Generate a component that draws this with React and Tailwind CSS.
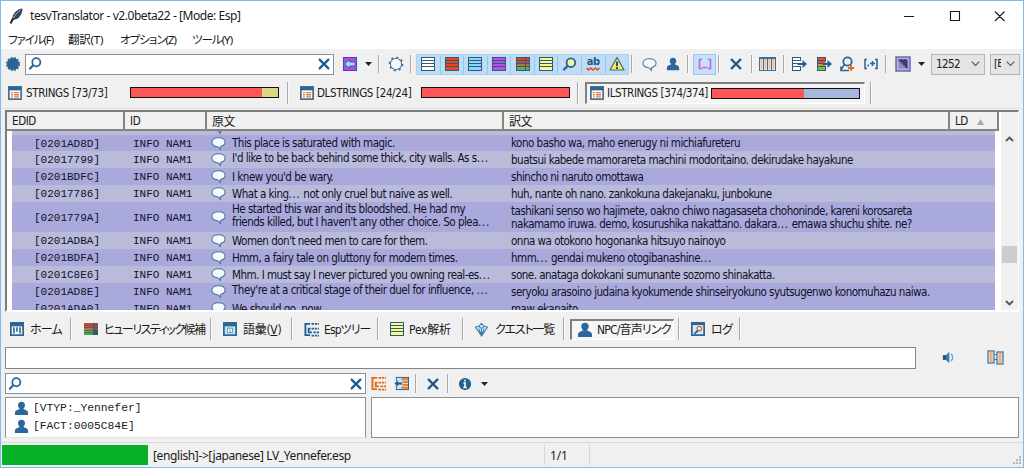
import clsx from "clsx";

const NAVY = "#2a6496";
const UI = "font-['DejaVu_Sans_Condensed','DejaVu_Sans','Noto_Sans_CJK_JP',sans-serif] [font-stretch:condensed]";
const SEGOE = "font-['Noto_Sans','Noto_Sans_CJK_JP',sans-serif]";
const MONO = "font-['Liberation_Mono','DejaVu_Sans_Mono',monospace]";

const Svg = ({ size = 16, children }) => (
    <svg width={size} height={size} viewBox="0 0 16 16" fill="none" className="shrink-0">
        {children}
    </svg>
);

const Sep = ({ className }) => (
    <div className={clsx("flex shrink-0 justify-center", className)}>
        <div className="h-full w-[2px] border-l border-[#a9a9a9] bg-[#fafafa]" />
    </div>
);

const Cell = ({ className, children }) => (
    <div className={clsx("flex shrink-0 items-center justify-center", className)}>{children}</div>
);

const QuillIcon = () => (
    <Svg>
        <path d="M14.5 .5c-4 .2-8 3-9.800 7.500L4 12.500l4.500-1.500C12.500 9 14.300 5 14.500 .5Z" fill="#2f4560" />
        <path d="M12.500 2C9.500 4 7 7 5.500 10" stroke="#a9bacb" />
        <path d="M5 10.500 2.500 15.500" stroke="#1b1b1b" strokeWidth="1.800" />
    </Svg>
);

const GearIcon = () => (
    <Svg>
        <circle cx="8" cy="8" r="6" fill={NAVY} />
        <circle cx="8" cy="8" r="6.300" stroke={NAVY} strokeWidth="1.400" strokeDasharray="2.100 1.200" />
    </Svg>
);

const DottedGearIcon = () => (
    <Svg>
        <circle cx="8" cy="8" r="5.500" stroke="#3a719f" strokeWidth="1.200" />
        <circle cx="8" cy="8" r="6.600" stroke="#3a719f" strokeWidth="1.500" strokeDasharray="2.200 2.980" />
        <circle cx="8" cy="8" r="4.900" fill="#f4f8fb" />
    </Svg>
);

const SearchIcon = ({ size = 14, fill = "none" }) => (
    <Svg size={size}>
        <circle cx="9.500" cy="6" r="4.600" stroke={NAVY} strokeWidth="2" fill={fill} />
        <path d="M6 9.500 1.500 14" stroke={NAVY} strokeWidth="2.400" />
    </Svg>
);

const CloseIcon = ({ size = 14 }) => (
    <Svg size={size}>
        <path d="M3 3l10 10M13 3 3 13" stroke="#22598a" strokeWidth="2.600" strokeLinecap="round" />
    </Svg>
);

const ListIcon = ({ fill, multi }) => (
    <Svg>
        <rect x="1.500" y="1.500" width="13" height="13" fill={fill} />
        {multi && <path d="M2 7h12v3H2z" fill="#b07a3a" />}
        {multi && <path d="M2 10h12v4H2z" fill="#6cab55" />}
        <path d="M1 4.500h14M1 7.500h14M1 10.500h14" stroke="#2c5a80" />
        {multi && <path d="M10.500 2v12" stroke="#2c5a80" />}
        <rect x="1.500" y="1.500" width="13" height="13" stroke="#2c5a80" />
    </Svg>
);

const SpellIcon = () => (
    <div className="flex h-4 w-4 flex-col items-center">
        <span className="font-['DejaVu_Sans',sans-serif] text-[11px] leading-[11px] font-bold tracking-[-0.5px] text-[#1f5a8a]">ab</span>
        <svg width="14" height="4" viewBox="0 0 14 4" fill="none">
            <path d="M.5 1 2.500 3 4.700 1 7 3 9.300 1 11.500 3 13.500 1" stroke="#e8431c" strokeWidth="1.500" />
        </svg>
    </div>
);

const WarnIcon = () => (
    <Svg>
        <path d="M8 1.500 15 14H1Z" fill="#f4ee5e" stroke="#3c6a7c" strokeWidth="1.200" strokeLinejoin="round" />
        <path d="M8 5.500v4.500M8 11v2" stroke="#1f5276" strokeWidth="2" />
    </Svg>
);

const BubbleIcon = ({ size = 15 }) => (
    <Svg size={size}>
        <path
            d="M8 1.800c-4 0-7 2-7 4.900 0 2.700 2.700 4.500 6 4.700.8 0 2 .9 2.800 3.100.5-.9.7-2.200.5-3.400 2.700-.6 4.700-2.300 4.700-4.400 0-2.900-3-4.900-7-4.900Z"
            fill="#f7fbfd"
            stroke="#3f789f"
            strokeWidth="1.100"
        />
    </Svg>
);

const PersonIcon = ({ size = 16 }) => (
    <Svg size={size}>
        <path d="M8 .8c2.400 0 3.700 1.500 3.700 3.500 0 1.500-.6 2.700-1.400 3.500v.9c2 .7 4.700 1.200 4.700 4V15H1v-2.300c0-2.800 2.700-3.300 4.700-4v-.9C4.900 7 4.300 5.800 4.300 4.300 4.300 2.300 5.600.8 8 .8Z" fill="#2c669a" />
    </Svg>
);

const BracketIcon = () => (
    <Svg>
        <path d="M5 3.500H2.500v9H5M11 3.500h2.500v9H11M5.500 11.500h5" stroke="#c062ee" strokeWidth="1.600" />
    </Svg>
);

const PurpleArrowIcon = () => (
    <Svg>
        <rect x="1.500" y="1.500" width="13" height="13" fill="#c53df0" stroke="#2f5b86" />
        <path d="M7.500 3.500 2.500 8l5 4.500v-2.500H13V6H7.500Z" fill="#8fe0fb" stroke="#2a6090" strokeWidth=".8" />
    </Svg>
);

const ColumnsIcon = () => (
    <svg width="17" height="16" viewBox="0 0 17 16" fill="none">
        <rect x=".5" y="1.500" width="16" height="13" fill="#f7efe8" stroke="#3c6f98" />
        <path d="M2.500 3.500v10M6.500 3.500v10M10.500 3.500v10M14.500 3.500v10" stroke="#d98d54" strokeWidth="2" strokeDasharray="1 1" />
        <path d="M4.500 2v12M8.500 2v12M12.500 2v12M0 2.500h17" stroke="#3c6f98" />
    </svg>
);

const ExportIcon = ({ colored }) => (
    <Svg>
        <rect x="1.500" y="1.500" width="8" height="13" fill={colored ? "#f04a22" : "#fff"} />
        {colored && <path d="M2 7h7v3H2z" fill="#d9903a" />}
        {colored && <path d="M2 10h7v4H2z" fill="#76c13e" />}
        <path d="M1 1.500h9M1 4.500h9M1 7.500h7M1 10.500h9M1 14.500h9M1.500 1v14M9.500 1v4M9.500 11v4" stroke="#2c5a80" />
        <path d="M6.500 7h5V4L16 8l-4.500 4V9h-5Z" fill="#235f92" />
    </Svg>
);

const FindUserIcon = () => (
    <Svg>
        <circle cx="8.500" cy="5.500" r="4.200" stroke={NAVY} strokeWidth="1.800" />
        <path d="M5.500 8.500 2 13.500M2 10.500v4h8" stroke={NAVY} strokeWidth="1.600" />
        <path d="M12 9v6M9 12h6" stroke="#e06a1a" strokeWidth="1.800" />
    </Svg>
);

const BraceArrowIcon = () => (
    <Svg>
        <path d="M4 3.500H2v9h2M12 3.500h2v9h-2M7 7.500h5M9.500 5v5" stroke={NAVY} strokeWidth="1.500" />
        <path d="M4.500 9.500h1.500" stroke={NAVY} strokeWidth="1.800" />
    </Svg>
);

const GradientIcon = () => (
    <Svg>
        <rect x="1" y="1" width="14" height="14" fill="#b7b4dc" stroke="#6460a8" strokeWidth="1.400" />
        <rect x="3.500" y="3.500" width="9" height="9" fill="#8c88c4" />
        <path d="M3.500 3.500 12.500 12.500V3.500Z" fill="#4b4788" />
        <path d="M3.500 3.500 12.500 12.500M6 3.500l6.500 6.500M9 3.500l3.500 3.500" stroke="#2b2862" strokeWidth="1.200" strokeDasharray="1.400 .8" />
    </Svg>
);

const Caret = () => (
    <svg width="7" height="4" viewBox="0 0 7 4">
        <path d="M0 0h7L3.500 4Z" fill="#222" />
    </svg>
);

const Chevron = () => (
    <svg width="9" height="6" viewBox="0 0 9 6" fill="none">
        <path d="M.7.7 4.500 4.500 8.300.7" stroke="#5a5a5a" strokeWidth="1.200" />
    </svg>
);

const FormIcon = () => (
    <Svg size={14}>
        <rect x="1" y="1" width="14" height="14" fill="#fff" stroke="#2f6592" strokeWidth="1.800" />
        <path d="M1 1h14v4H1z" fill="#2f6592" />
        <path d="M3.500 7.500h2M3.500 10h2M3.500 12.500h2M7 7.500h5.500M7 10h5.500M7 12.500h5.500" stroke="#df7838" strokeWidth="1.500" />
    </Svg>
);

const HomeIcon = () => (
    <Svg size={14}>
        <rect x="1" y="1" width="14" height="14" fill="#f5fafd" stroke="#2f6592" strokeWidth="2" />
        <path d="M1 1h14v4H1z" fill="#2f6592" />
        <path d="M4.500 6v7M8 6v5M11.500 6v7" stroke="#3a79a8" strokeWidth="2" />
    </Svg>
);

const VocabIcon = () => (
    <Svg size={14}>
        <rect x="1" y="1" width="14" height="14" fill="#cbe6f3" stroke="#2f6592" strokeWidth="2" />
        <path d="M1 1h14v4H1z" fill="#2f6592" />
        <rect x="5" y="7" width="6" height="5" fill="#fff" stroke="#4d97c4" />
        <path d="M8 7v5" stroke="#4d97c4" />
    </Svg>
);

const TreeIcon = ({ color = "#24608f" }) => (
    <Svg size={15}>
        <path d="M6.500 2H1.500v12h5M7 7H5v4h3.500" stroke={color} strokeWidth="2" />
        <path d="M8 2h8M8 7h8M10 11h6M8 14.500h8" stroke={color} strokeWidth="1.800" strokeDasharray="2.600 .9" />
    </Svg>
);

const HeuristicIcon = () => (
    <Svg>
        <rect x="1" y="2" width="14" height="12" fill="#345a72" />
        <path d="M1 3h9M1 5.500h9" stroke="#f04a22" strokeWidth="1.700" />
        <path d="M1 8h9" stroke="#d9803a" strokeWidth="1.500" />
        <path d="M1 10.500h9M1 13h9" stroke="#5cb646" strokeWidth="1.500" />
        <path d="M11 3h4M11 5.500h4M11 8h4" stroke="#b0503a" strokeWidth="1.400" />
    </Svg>
);

const QuestIcon = () => (
    <Svg size={15}>
        <path d="M8 1.500 5 4.500l3 2.500 3-2.500ZM1.500 5.500 8 15l6.500-9.500-3.500-1L8 7 5 4.500ZM5 7l3 7 3-7M8 7v7" fill="#d9edf7" stroke="#3f7dab" strokeWidth="1.100" />
    </Svg>
);

const LogIcon = () => (
    <Svg size={14}>
        <rect x="1" y="1" width="14" height="14" fill="#d8eaf5" stroke="#2f6592" strokeWidth="2" />
        <path d="M1 1h14v2.500H1z" fill="#2f6592" />
        <circle cx="9.500" cy="7.500" r="2.500" fill="#fff" stroke="#d26a35" strokeWidth="1.500" />
        <path d="M8 9.500 4 13.500" stroke="#2f6592" strokeWidth="2.200" />
    </Svg>
);

const ImportIcon = () => (
    <Svg size={15}>
        <rect x="2.500" y="1.500" width="13" height="13" fill="#cde2ef" stroke="#2c5a80" />
        <path d="M8 3.500h7M9 6.500h6M9 9.500h6M8 12.500h7" stroke="#e07a2a" strokeWidth="2" />
        <path d="M0 8l4.500-4v2.500H9v3H4.500V12Z" fill="#235f92" stroke="#e9f3f8" strokeWidth=".6" />
    </Svg>
);

const InfoIcon = () => (
    <Svg size={14}>
        <circle cx="8" cy="8" r="7" fill="#23608f" />
        <path d="M8 3v2.200M6.300 7H8v4.500M6 12h4" stroke="#fff" strokeWidth="1.800" />
    </Svg>
);

const SpeakerIcon = () => (
    <Svg size={13}>
        <path d="M1 5h4l4-4v14l-4-4H1Z" fill="#3a77ab" />
        <path d="M1.500 5.500h3v5h-3z" fill="#1d5183" />
        <path d="M11 3.500c2.800 2.200 2.800 6.800 0 9" stroke="#69a7d1" strokeWidth="1.700" />
    </Svg>
);

const LinkedDocsIcon = () => (
    <svg width="17" height="15" viewBox="0 0 17 15" fill="none">
        <path d="M7 4.500h3M7 9.500h3" stroke="#3a74a4" />
        <rect x="1" y="1" width="6" height="12" fill="#f7e6da" stroke="#4d80ab" strokeWidth="1.400" />
        <rect x="10" y="2" width="6" height="12" fill="#f7e6da" stroke="#4d80ab" strokeWidth="1.400" />
        <path d="M4 2.500v9.500M13 3.500v9.500" stroke="#d9793c" strokeWidth="3" strokeDasharray="1 1" />
    </svg>
);

const menus = [
    { label: "ファイル(F)", className: "w-[60px]", text: "tracking-[-1.1px]" },
    { label: "翻訳(T)", className: "w-[52px]", text: "tracking-[-0.2px]" },
    { label: "オプション(Z)", className: "w-[72px]", text: "tracking-[-1px]" },
    { label: "ツール(Y)", className: "w-[50px]", text: "tracking-[-1px]" },
];

const filters = [
    <ListIcon fill="#fff" />,
    <ListIcon fill="#f0431a" />,
    <ListIcon fill="#8bd6fa" />,
    <ListIcon fill="#c04af2" />,
    <ListIcon fill="#dd4422" multi />,
    <ListIcon fill="#fbf98a" />,
    <SearchIcon size={15} fill="#f6f4a0" />,
    <SpellIcon />,
    <WarnIcon />,
];

const rows = [
    { id: "[0201AD8D]", en: "This place is saturated with magic.", ja: "kono basho wa, maho enerugy ni michiafureteru", h: "h-4", bg: "bg-[#a9a9dc]" },
    { id: "[02017799]", en: "I'd like to be back behind some thick, city walls. As s...", ja: "buatsui kabede mamorareta machini modoritaino. dekirudake hayakune", h: "h-[17px]", bg: "bg-[#babadb]", up: true },
    { id: "[0201BDFC]", en: "I knew you'd be wary.", ja: "shincho ni naruto omottawa", h: "h-[17px]", bg: "bg-[#a9a9dc]" },
    { id: "[02017786]", en: "What a king... not only cruel but naive as well.", ja: "huh, nante oh nano. zankokuna dakejanaku, junbokune", h: "h-[17px]", bg: "bg-[#babadb]" },
    { id: "[0201779A]", en: "He started this war and its bloodshed. He had my\nfriends killed, but I haven't any other choice. So plea...", ja: "tashikani senso wo hajimete, oakno chiwo nagasaseta chohoninde, kareni korosareta\nnakamamo iruwa. demo, kosurushika nakattano. dakara... emawa shuchu shite. ne?", h: "h-[30px]", bg: "bg-[#a9a9dc]", up: true },
    { id: "[0201ADBA]", en: "Women don't need men to care for them.", ja: "onna wa otokono hogonanka hitsuyo nainoyo", h: "h-[17px]", bg: "bg-[#babadb]" },
    { id: "[0201BDFA]", en: "Hmm, a fairy tale on gluttony for modern times.", ja: "hmm... gendai mukeno otogibanashine...", h: "h-[17px]", bg: "bg-[#a9a9dc]" },
    { id: "[0201C8E6]", en: "Mhm. I must say I never pictured you owning real-es...", ja: "sone. anataga dokokani sumunante sozomo shinakatta.", h: "h-[17px]", bg: "bg-[#babadb]" },
    { id: "[0201AD8E]", en: "They're at a critical stage of their duel for influence, ...", ja: "seryoku arasoino judaina kyokumende shinseiryokuno syutsugenwo konomuhazu naiwa.", h: "h-[17px]", bg: "bg-[#a9a9dc]", up: true },
    { id: "[0201ADA0]", en: "We should go, now.", ja: "maw ekanaito", h: "h-[17px]", bg: "bg-[#a9a9dc]" },
];

const tabs = [
    { label: "ホーム", icon: <HomeIcon />, className: "w-[61px] pl-[4px] gap-[6px]", text: "tracking-[-0.8px]" },
    { label: "ヒューリスティック候補", icon: <HeuristicIcon />, className: "w-[132px] pl-[8px] gap-[5px]", text: "tracking-[-1.500px]" },
    { label: "語彙(V)", icon: <VocabIcon />, className: "w-[73px] pl-[8px] gap-[6px]", text: "tracking-[-0.3px]" },
    { label: "Espツリー", icon: <TreeIcon />, className: "w-[78px] pl-[8px] gap-[5px]", text: "tracking-[-0.9px]" },
    { label: "Pex解析", icon: <ListIcon fill="#fbf98a" />, className: "w-[77px] pl-[7px] gap-[4px]", text: "tracking-[-0.2px]" },
    { label: "クエスト一覧", icon: <QuestIcon />, className: "w-[93px] pl-[7px] gap-[6px]", text: "tracking-[-1.200px]" },
    { label: "NPC/音声リンク", icon: <PersonIcon />, className: "mr-px ml-[2px] w-[104px] pl-[5px] gap-[4px]", text: "tracking-[-0.8px]", active: true },
    { label: "ログ", icon: <LogIcon />, className: "w-[53px] pl-[8px] gap-[6px]", text: "tracking-[-0.8px]" },
];

// Dots of an ellipsis sit wider apart than the letters around them
const Line = ({ text }) =>
    text.split("...").map((part, i) => (
        <span key={i}>
            {i > 0 && <span className="tracking-[0.7px]">...</span>}
            {part}
        </span>
    ));

const HeaderCell = ({ className, children }) => (
    <div className={clsx("flex h-full shrink-0 items-center border-r-2 border-b-2 border-[#85857f] bg-[#f0f0f0] pt-[3px] pl-[5px]", className)}>
        {children}
    </div>
);

const Progress = ({ className, fill, rest }) => (
    <div className={clsx("h-[11px] w-[149px] shrink-0 border border-[#111]", rest, className)}>
        <div className={clsx("h-full bg-[#ff5656]", fill)} />
    </div>
);

const SearchBox = ({ className }) => (
    <div className={clsx("flex shrink-0 items-center justify-between border border-[#8c9199] bg-white px-[2px]", className)}>
        <SearchIcon />
        <CloseIcon />
    </div>
);

export default function App() {
    return (
        <div className={clsx("flex h-[468px] w-[1024px] flex-col overflow-hidden border border-[#82b9ee] bg-[#f0f0f0] text-[#1a1a1a]", UI)}>
            {/* Title bar */}
            <div className="flex h-[30px] shrink-0 items-center bg-white pl-[7px]">
                <QuillIcon />
                <span className={clsx("ml-[6px] text-[12px] tracking-[-0.44px]", SEGOE)}>tesvTranslator - v2.0beta22 - [Mode: Esp]</span>
                <div className="ml-auto flex items-center pr-[17px]">
                    <svg width="102" height="12" viewBox="0 0 102 12" fill="none" stroke="#1a1a1a" strokeWidth="1.100">
                        <path d="M0 6.500h10M46.500 1.500h9v9h-9ZM91 1.500l9.500 9.500M100.500 1.500 91 11" />
                    </svg>
                </div>
            </div>

            {/* Menu */}
            <div className={clsx("flex h-[18px] shrink-0 items-center bg-white pl-[7px] text-[11.5px] leading-[18px] whitespace-nowrap [font-feature-settings:'palt']", SEGOE)}>
                {menus.map((menu) => (
                    <span key={menu.label} className={clsx("shrink-0", menu.className, menu.text)}>
                        {menu.label}
                    </span>
                ))}
            </div>

            {/* Main toolbar */}
            <div className="flex h-[30px] shrink-0 items-center">
                <Cell className="w-6"><GearIcon /></Cell>
                <SearchBox className="h-[21px] w-[309px]" />
                <Cell className="w-[31px]"><PurpleArrowIcon /></Cell>
                <Cell className="w-[7px]"><Caret /></Cell>
                <Sep className="h-[18px] w-[14px]" />
                <Cell className="w-5"><DottedGearIcon /></Cell>
                <Sep className="h-[18px] w-[9px]" />
                <div className="ml-px flex h-[21px] w-[213px] shrink-0 divide-x divide-[#90c8f6] border border-[#a5d3f8] bg-[#c0dcf3]">
                    {filters.map((icon, i) => (
                        <div key={i} className="flex flex-1 items-center justify-center">{icon}</div>
                    ))}
                </div>
                <Sep className="h-[18px] w-[5px]" />
                <Cell className="w-[30px]"><BubbleIcon size={15} /></Cell>
                <Cell className="w-[18px]"><PersonIcon size={14} /></Cell>
                <Sep className="h-[18px] w-[11px]" />
                <Cell className="h-[21px] w-[23px] border border-[#90c8f6] bg-[#c6e0f6]"><BracketIcon /></Cell>
                <Sep className="h-[18px] w-[5px]" />
                <Cell className="w-[29px]"><CloseIcon /></Cell>
                <Sep className="h-[18px] w-[3px]" />
                <Cell className="w-[29px]"><ColumnsIcon /></Cell>
                <Sep className="h-[18px] w-[3px]" />
                <Cell className="w-[28px]"><ExportIcon /></Cell>
                <Cell className="w-[21px]"><ExportIcon colored /></Cell>
                <Cell className="w-[26px]"><FindUserIcon /></Cell>
                <Cell className="w-[22px]"><BraceArrowIcon /></Cell>
                <Sep className="h-[18px] w-[7px]" />
                <Cell className="w-[28px]"><GradientIcon /></Cell>
                <Cell className="w-2"><Caret /></Cell>
                <div className="ml-[6px] flex h-[21px] w-[54px] shrink-0 items-center justify-between border border-[#b4b4b4] bg-[#e4e4e4] pr-1 pl-[4px] text-[11.5px]">
                    <span className="pt-px tracking-[-0.6px]">1252</span>
                    <Chevron />
                </div>
                <div className="ml-[5px] flex h-[21px] w-[30px] shrink-0 items-center justify-between border border-[#b4b4b4] bg-[#e4e4e4] pr-1 pl-[3px] text-[11px]">
                    <span className="w-[7px] overflow-hidden pt-px tracking-[-0.6px]">[E</span>
                    <Chevron />
                </div>
            </div>

            {/* String tables */}
            <div className="flex h-[30px] shrink-0 items-center border-b border-[#e2e2e2] pb-[2px] pl-[7px] text-[11.5px] whitespace-nowrap">
                <FormIcon />
                <span className="ml-1 w-[104px] pt-[2px] tracking-[-0.35px]">STRINGS [73/73]</span>
                <Progress fill="w-[131px]" rest="bg-[#d9d982]" />
                <Sep className="mr-[3px] h-[22px] w-[18px]" />
                <FormIcon />
                <span className="ml-[3px] w-[104px] pt-[2px] tracking-[-0.35px]">DLSTRINGS [24/24]</span>
                <Progress fill="w-full" rest="bg-[#ff5656]" />
                <Sep className="h-[22px] w-[15px]" />
                <div className="flex h-[22px] w-[280px] shrink-0 items-center border-t-2 border-r border-b border-l-2 border-t-[#808080] border-r-white border-b-white border-l-[#808080] bg-[#f4f4f4] pl-[3px]">
                    <FormIcon />
                    <span className="ml-[3px] w-[104px] pt-px tracking-[-0.4px]">ILSTRINGS [374/374]</span>
                    <Progress fill="w-[92px]" rest="bg-[#a8b8dc]" />
                </div>
                <Sep className="h-[22px] w-[12px]" />
            </div>

            {/* Translation list */}
            <div className="mt-px ml-1 flex h-[202px] w-[1014px] shrink-0 border-t-2 border-r border-b-2 border-l-2 border-t-[#7d7d7d] border-r-white border-b-white border-l-[#7d7d7d] bg-white">
                <div className="flex w-[992px] shrink-0 flex-col">
                    <div className="flex h-[19px] shrink-0 text-[11.5px] tracking-[-0.4px]">
                        <HeaderCell className="w-[118px]">EDID</HeaderCell>
                        <HeaderCell className="w-[82px]">ID</HeaderCell>
                        <HeaderCell className="w-[297px] text-[12px]">原文</HeaderCell>
                        <HeaderCell className="w-[446px] text-[12px]">訳文</HeaderCell>
                        <HeaderCell className="w-[49px]">
                            LD
                            <svg width="7" height="6" viewBox="0 0 7 6" className="ml-[9px]">
                                <path d="M3.500 0 7 6H0Z" fill="#a8a8a8" />
                            </svg>
                        </HeaderCell>
                    </div>
                    <div className="mr-1 ml-[5px] flex h-[179px] flex-col overflow-hidden text-[11.5px] leading-[13px] text-[#101028]">
                        <div className="flex h-[4px] shrink-0 items-end overflow-hidden bg-[#babadb] pl-[199px]">
                            <div className="flex h-[15px] items-end"><BubbleIcon /></div>
                        </div>
                        {rows.map((row) => (
                            <div key={row.id} className={clsx("flex shrink-0 items-center tracking-[-0.5px]", row.h, row.bg)}>
                                <span className={clsx("w-[99px] shrink-0 pt-[2px] pl-[22px] text-[11px] tracking-normal", MONO)}>{row.id}</span>
                                <span className={clsx("w-[100px] shrink-0 pt-[2px] pl-[22px] text-[11px] tracking-normal", MONO)}>INFO NAM1</span>
                                <BubbleIcon />
                                <span className={clsx("ml-[6px] w-[279px] shrink-0 whitespace-pre", row.up ? "pb-[2px]" : "pt-px")}>
                                    <Line text={row.en} />
                                </span>
                                <span className="pt-px whitespace-pre">
                                    <Line text={row.ja} />
                                </span>
                            </div>
                        ))}
                    </div>
                </div>
                <div className="ml-auto flex w-[17px] flex-col items-center bg-[#f0f0f0] pt-[24px] pb-[4px]">
                    <svg width="9" height="6" viewBox="0 0 9 6" fill="none">
                        <path d="M1 5 4.500 1.500 8 5" stroke="#555" strokeWidth="1.800" />
                    </svg>
                    <div className="mt-[104px] h-[17px] w-[15px] bg-[#cdcdcd]" />
                    <svg width="9" height="6" viewBox="0 0 9 6" fill="none" className="mt-auto">
                        <path d="M1 1 4.500 4.500 8 1" stroke="#555" strokeWidth="1.800" />
                    </svg>
                </div>
            </div>

            {/* Panel tabs */}
            <div className="flex h-[34px] shrink-0 items-center pl-[5px] text-[12px] whitespace-nowrap">
                {tabs.map((tab) => (
                    <div key={tab.label} className="flex shrink-0 items-center">
                        <div
                            className={clsx(
                                "flex h-[21px] items-center",
                                tab.className,
                                tab.active && "border-t-2 border-r border-b border-l-2 border-t-[#808080] border-r-white border-b-white border-l-[#808080] bg-[#f6f6f6]"
                            )}
                        >
                            {tab.icon}
                            <span className={clsx("pt-px [font-feature-settings:'palt']", tab.text)}>
                                {tab.label === "語彙(V)" ? <>語彙(<u>V</u>)</> : tab.label}
                            </span>
                        </div>
                        <Sep className="h-[22px] w-2" />
                    </div>
                ))}
            </div>

            {/* Voice path */}
            <div className="flex h-[23px] shrink-0 items-center pl-1">
                <div className="h-[22px] w-[911px] shrink-0 border border-[#858585] bg-white" />
                <Cell className="ml-[16px] w-8"><SpeakerIcon /></Cell>
                <Cell className="ml-[15px] w-8"><LinkedDocsIcon /></Cell>
            </div>

            {/* Linked records */}
            <div className="mt-[3px] flex h-[23px] shrink-0 items-center pl-1">
                <SearchBox className="h-[21px] w-[361px]" />
                <Cell className="w-[24px]"><TreeIcon color="#df6c14" /></Cell>
                <Cell className="w-[22px]"><ImportIcon /></Cell>
                <Sep className="h-[19px] w-[7px]" />
                <Cell className="w-[27px]"><CloseIcon /></Cell>
                <Sep className="h-[19px] w-[3px]" />
                <Cell className="w-[31px]"><InfoIcon /></Cell>
                <Cell className="w-2"><Caret /></Cell>
            </div>
            <div className="mt-[2px] flex h-[41px] shrink-0 gap-[5px] pl-1">
                <div className={clsx("flex w-[361px] shrink-0 flex-col border border-[#8c9199] border-b-[#e4e4e4] bg-white pt-[1px] pl-[8px] text-[11.3px]", MONO)}>
                    {["[VTYP:_Yennefer]", "[FACT:0005C84E]"].map((name) => (
                        <div key={name} className="flex h-[18px] items-center gap-[4px]">
                            <PersonIcon size={15} />
                            <span className="pt-px">{name}</span>
                        </div>
                    ))}
                </div>
                <div className="w-[648px] shrink-0 border border-[#8c9199] bg-white" />
            </div>

            {/* Status bar */}
            <div className={clsx("mt-[4px] flex h-[24px] shrink-0 items-center border-t border-[#d9d9d9] text-[12px]", SEGOE)}>
                <div className="ml-px h-[20px] w-[146px] shrink-0 bg-[#06b025]" />
                <span className="w-[396px] shrink-0 pt-[2px] pl-[5px] tracking-[-0.38px]">[english]-&gt;[japanese] LV_Yennefer.esp</span>
                <div className="flex h-[21px] w-[46px] shrink-0 items-center border-x border-[#d7d7d7] pt-[2px] pl-[5px] tracking-[-0.2px]">1/1</div>
                <svg width="8" height="8" viewBox="0 0 8 8" fill="#b8b8b8" className="mt-auto mr-[2px] mb-[2px] ml-auto">
                    <path d="M6 0h2v2H6zM3 3h2v2H3zM6 3h2v2H6zM0 6h2v2H0zM3 6h2v2H3zM6 6h2v2H6z" />
                </svg>
            </div>
        </div>
    );
}
